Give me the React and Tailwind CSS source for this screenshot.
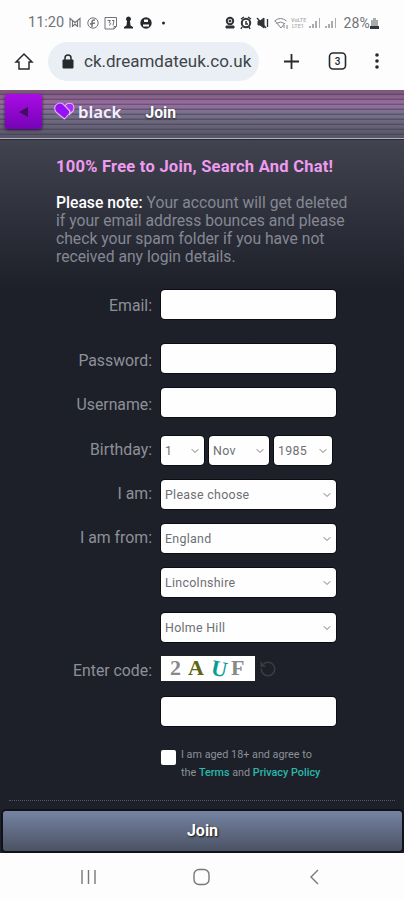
import { ChevronDown, RotateCcw } from "lucide-react";

const labelClass = "w-[96px] shrink-0 text-right text-[15.8px] leading-[20px] text-[#8d9099]";
const boxClass = "rounded-[4px] bg-[#fefefe] shadow-[0_0_0_1px_#0b0d12]";

const Row = ({ label, className = "", labelOffset = "", children }) => (
  <div className={`flex items-center gap-[9px] ${className}`}>
    <label className={`${labelClass} ${labelOffset}`}>{label}</label>
    {children}
  </div>
);

const TextField = ({ type = "text", label }) => (
  <input type={type} aria-label={label} className={`h-[29px] w-[175px] px-2 text-[13px] outline-none ${boxClass}`} />
);

const SelectField = ({ value, width = "w-[175px]" }) => (
  <button type="button" className={`flex h-[29px] items-center justify-between pt-[1px] pr-[3px] pl-[4px] text-left text-[12.4px] tracking-[0.3px] text-[#6d7074] ${width} ${boxClass}`}>
    <span className="pt-[1px] whitespace-nowrap">{value}</span>
    <ChevronDown className="size-3 text-[#777]" strokeWidth={2} />
  </button>
);

const StatusBar = () => (
  <div className="flex h-[42px] items-center pt-[4px] pr-[25px] pl-[28px] text-[#707377]">
    <span className="w-[36px] text-[14.5px] leading-none">11:20</span>
    <svg width="103" height="16" viewBox="0 0 103 16" className="ml-[4px]" fill="none" stroke="currentColor">
      <path d="M2 12.500V3.500l5 4 5-4v9M4.500 12V6m5 6V6M5 11l2-2 2 2" strokeWidth="1.100" />
      <circle cx="25" cy="8" r="5.200" />
      <path d="M24 12V7.500q0-3 3-2.500m-5 4 5-1" strokeWidth="1.500" />
      <path d="M37 2.500h11.500v9l-2.500 2.500h-9zM46 14v-2.500h2.500" />
      <path d="M39.500 5.500h3L41 7.500q3.500 1 0 3m3-5h2l-1 5" />
      <path d="M60.500 1.500a2.500 2.500 0 0 0-1.500 4.500L58.500 10.500 56 12v1.500h9V12l-2.500-1.500L62 6a2.500 2.500 0 0 0-1.500-4.500z" fill="#25282b" stroke="none" />
      <circle cx="78" cy="8" r="5.700" fill="#25282b" stroke="none" />
      <path d="M76 4.500h4v2.500h-4zM75 11.500v-2h6v2z" fill="#fff" stroke="none" />
      <circle cx="95.500" cy="8" r="1.500" fill="#25282b" stroke="none" />
    </svg>
    <svg width="119" height="16" viewBox="0 0 119 16" className="ml-auto overflow-visible" fill="none" stroke="#303337">
      <g transform="translate(-7 0)">
        <circle cx="5" cy="6" r="3.200" strokeWidth="2" />
        <circle cx="5" cy="6" r="1" fill="#303337" />
        <path d="M1 13v-2h8v2z" fill="#303337" />
        <circle cx="21" cy="8" r="4.200" strokeWidth="2" />
        <path d="m16 4 3-2m4 0 3 2m-5 2v3h2m-6 3-1 2m8-2 1 2" strokeWidth="1.500" />
        <path d="M33 6h2l4-3v10l-4-3h-2z" fill="#303337" />
        <path d="m32 3 9 10M42.500 4v8" strokeWidth="1.300" />
        <path d="M49.500 6q6-5 12 0M51.500 8.500q4-3 8 0M50 6l6 7 4-5M59 13v-3m3 4v-4" stroke="#808387" />
      </g>
      <g fill="#aaacae" stroke="none" transform="translate(-2 0)">
        <text x="61" y="7" fontFamily="Roboto" fontSize="5.500" fontWeight="500">VoLTE</text>
        <text x="62" y="13" fontFamily="Roboto" fontSize="5.500" fontWeight="500">LTE1</text>
        <path d="M79 11h2v2h-2zM82 9h2v4h-2zM85 6h2v7h-2zM89 3h1v10h-1zM95 11h2v2h-2zM98 9h2v4h-2zM101 6h2v7h-2zM105 3h1v10h-1z" />
      </g>
    </svg>
    <span className="ml-[-8px] text-[14px] leading-none tracking-[0.2px]">28%</span>
    <svg width="9" height="13" viewBox="0 0 9 13"><path d="M3 1h3v2h2v9H1V3h2z" fill="#aaa" /><path d="M0 9h9v3H0z" fill="#34373b" /></svg>
  </div>
);

const BrowserBar = () => (
  <div className="flex h-[48px] items-start text-[#26292c]">
    <svg width="20" height="20" viewBox="0 0 20 20" className="mt-[10px] ml-[14px]" fill="none" stroke="currentColor" strokeWidth="1.500">
      <path d="M2 10 10 2l8 8h-3v7H5v-7z" />
    </svg>
    <div className="ml-[14px] flex h-[39px] w-[211px] items-center rounded-full bg-[#e9eff4] pl-[14px]">
      <svg width="12" height="16" viewBox="0 0 12 16">
        <path d="M3 7V4a3 3 0 0 1 6 0v3" fill="none" stroke="currentColor" strokeWidth="1.500" />
        <rect x=".5" y="5.500" width="11" height="9" rx="1" fill="currentColor" />
      </svg>
      <span className="ml-[10px] pt-[1px] text-[17px] text-[#414448]">ck.dreamdateuk.co.uk</span>
    </div>
    <svg width="120" height="24" viewBox="0 0 120 24" className="ml-[19px] mt-[7px]" fill="none" stroke="currentColor">
      <path d="M6 12.500h15M13.500 5v15" strokeWidth="1.800" />
      <rect x="51.500" y="4" width="16" height="16" rx="3.500" strokeWidth="1.600" />
      <text x="59.500" y="15.500" textAnchor="middle" fill="currentColor" stroke="none" fontFamily="Roboto" fontSize="10" fontWeight="500">3</text>
      <g fill="currentColor" stroke="none"><circle cx="99" cy="6" r="1.800" /><circle cx="99" cy="12" r="1.800" /><circle cx="99" cy="18" r="1.800" /></g>
    </svg>
  </div>
);

const Header = () => (
  <header className="h-[50px] border-b border-[#242838]">
    <div className="flex h-[49px] items-start border-b border-[#b5b2bb] bg-[repeating-linear-gradient(to_bottom,transparent_0px,transparent_3px,#3734496b_4px,#37344980_5px),linear-gradient(to_bottom,#7c5577_0%,#986e9f_28%,#77708a_50%,#575464_100%)]">
      <button type="button" aria-label="Back" className="mt-[4px] ml-[5px] flex h-[35px] w-[37px] items-center justify-center rounded-[3px] bg-linear-to-b from-[#aa0ce5] to-[#7503b5] shadow-[0_1px_3px_#28143b]">
        <svg width="12" height="12" viewBox="0 0 12 12"><path d="m1 6 9-5v10z" fill="#41105d" /></svg>
      </button>
      <svg width="21" height="18" viewBox="0 0 21 18" className="mt-[12px] ml-[12px]" stroke="#e3b5f7" strokeWidth="1.100" strokeLinejoin="round">
        <path d="M10.500 17 2.500 10.500Q-.5 7 1.500 3.500 5-.5 9 2l6 6q1.500 2 0 4z" fill="#9412f5" />
        <path d="M11 3.500q3-3.500 7.500-1.500Q21 5 19 9l-3.500 3.500Q17 10 15 8z" fill="#a82bf7" />
      </svg>
      <span className="mt-[9px] ml-[3px] font-['Noto_Sans'] text-[16.800px] leading-[26px] font-semibold text-[#f8efff]">black</span>
      <h1 className="mt-[11px] ml-[24px] text-[15.700px] leading-[24px] font-bold text-white [text-shadow:0_1px_2px_#222]">Join</h1>
    </div>
  </header>
);

const JoinForm = () => (
  <form className="flex flex-col pl-[56px]">
    <Row label="Email:" className="mt-[24px]" labelOffset="pt-[3px]"><TextField label="Email" /></Row>
    <Row label="Password:" className="mt-[25px]" labelOffset="pt-[4px]"><TextField type="password" label="Password" /></Row>
    <Row label="Username:" className="mt-[15px]" labelOffset="pt-[4px]"><TextField label="Username" /></Row>
    <Row label="Birthday:" className="mt-[19px]" labelOffset="pb-[2px]">
      <div className="flex gap-[5px]">
        <SelectField value="1" width="w-[43px]" />
        <SelectField value="Nov" width="w-[60px]" />
        <SelectField value="1985" width="w-[58px]" />
      </div>
    </Row>
    <Row label="I am:" className="mt-[15px]" labelOffset="pb-[2px]"><SelectField value="Please choose" /></Row>
    <Row label="I am from:" className="mt-[15px]" labelOffset="pb-[1px]"><SelectField value="England" /></Row>
    <Row label="" className="mt-[15px]"><SelectField value="Lincolnshire" /></Row>
    <Row label="" className="mt-[16px]"><SelectField value="Holme Hill" /></Row>
    <Row label="Enter code:" className="mt-[14px]" labelOffset="pt-[4px]">
      <div className="flex items-center gap-[4px]">
        <svg width="94" height="25" viewBox="0 0 94 25" className="overflow-visible bg-white font-['Liberation_Serif'] text-[22px] font-bold">
          <text x="9" y="18.500" fill="#888">2</text>
          <text x="27" y="18.500" fill="#5d6413">A</text>
          <text x="50" y="20" fill="#079c96" transform="rotate(12 58 14)">U</text>
          <text x="70" y="18.500" fill="#888">F</text>
        </svg>
        <RotateCcw className="size-[18px] text-[#3b3d41]" />
      </div>
    </Row>
    <Row label="" className="mt-[16px]"><TextField label="Code" /></Row>
    <div className="mt-[20px] ml-[105px] flex items-start gap-[5px]">
      <input type="checkbox" aria-label="Agree" className="mt-[4px] size-[15px] appearance-none rounded-[2px] bg-white" />
      <p className="text-[10.8px] leading-[17.500px] text-[#8c9097]">
        I am aged 18+ and agree to<br />
        the <a href="#" className="font-medium text-[#28b9ac]">Terms</a> and <a href="#" className="font-medium text-[#28b9ac]">Privacy Policy</a>
      </p>
    </div>
  </form>
);

const App = () => {
  return (
    <div className="flex h-[900px] w-[404px] flex-col overflow-hidden bg-[#fdfdfe] font-['Roboto',sans-serif]">
      <StatusBar />
      <BrowserBar />
      <div className="h-[763px] bg-[#1d2029]">
        <Header />
        <main className="bg-linear-to-b from-[#41434f] to-[#1d2029] to-[150px]">
          <div className="px-[56px] pt-[16px]">
            <h2 className="text-[16.5px] leading-[22px] font-bold tracking-[0.25px] whitespace-nowrap text-[#ef9bf1]">100% Free to Join, Search And Chat!</h2>
            <p className="mt-[16px] text-[15.700px] leading-[18px] whitespace-nowrap text-[#858894]">
              <strong className="font-medium text-white">Please note:</strong> Your account will get deleted<br />
              if your email address bounces and please<br />
              check your spam folder if you have not<br />
              received any login details.
            </p>
          </div>
          <JoinForm />
          <div className="mx-[9px] mt-[19px] border-t border-dotted border-[#565a62]" />
          <button type="button" className="mt-[10px] ml-[3px] h-[40px] w-[399px] rounded-[3px] bg-linear-to-b from-[#7684a3] to-[#4b5364] pb-[1px] text-[16px] font-bold text-white shadow-[0_0_0_2px_#10121a] [text-shadow:1px_1px_2px_#111]">Join</button>
        </main>
      </div>
      <nav className="flex flex-1 items-center justify-center bg-[#fdfdfe] text-[#777]">
        <svg width="240" height="20" viewBox="0 0 240 20" className="-ml-[2px]" fill="none" stroke="currentColor" strokeWidth="1.400">
          <path d="M1 3v14M7.500 3v14M14 3v14M237 3l-7 7 7 7" />
          <rect x="113" y="2.500" width="15" height="15" rx="5" />
        </svg>
      </nav>
    </div>
  );
};

export default App;
